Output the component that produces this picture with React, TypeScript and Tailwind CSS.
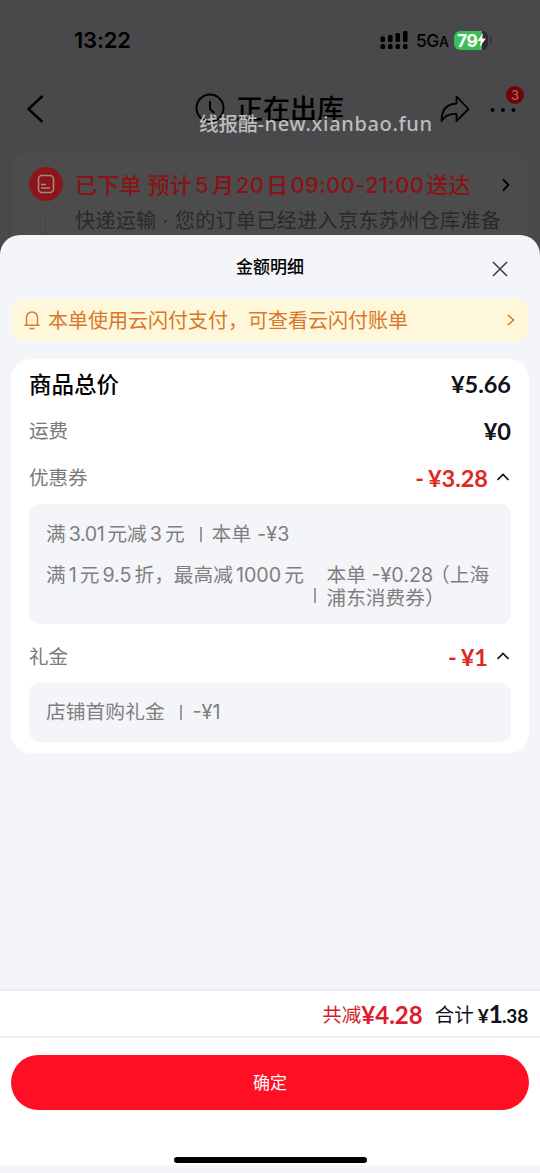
import React from "react";

const font = "font-['Inter','Noto_Sans_CJK_SC',sans-serif]";

function StatusBar() {
  return (
    <div className="flex h-[62px] items-center pt-[18px] pl-[74px] text-black">
      <span className="w-[306px] text-[22px] leading-[44px] font-semibold tracking-[-0.2px]">
        13:22
      </span>
      <svg width="28" height="20" viewBox="0 0 28 20" fill="#000">
        <rect x="0.5" y="6.5" width="4.5" height="5.5" rx="1.2" />
        <rect x="8" y="5" width="4.5" height="7" rx="1.2" />
        <rect x="15.5" y="3" width="4.5" height="9" rx="1.2" />
        <rect x="23" y="1" width="4.5" height="11" rx="1.2" />
        <rect x="0.5" y="14" width="4.5" height="5" rx="1.5" />
        <rect x="8" y="14" width="4.5" height="5" rx="1.5" />
        <rect x="15.5" y="14" width="4.5" height="5" rx="1.5" />
        <rect x="23" y="14" width="4.5" height="5" rx="1.5" />
      </svg>
      <span className="ml-2 w-[38px] pt-[2px] text-[17.5px] font-medium tracking-[-0.5px] whitespace-nowrap">
        5G<span className="text-[14px]">A</span>
      </span>
      <div className="relative flex h-[19px] w-[34px] items-center overflow-hidden rounded-[6px] bg-[#2c2d31]">
        <div className="absolute inset-y-0 left-0 w-[28px] bg-[#3bbd58]" />
        <span className="relative ml-[3px] text-[17.5px] leading-[19px] font-bold tracking-[-0.5px] text-white">
          79
        </span>
        <svg
          className="relative"
          width="9"
          height="14"
          viewBox="0 0 9 14"
          fill="#fff"
        >
          <path d="M6 0L0.5 8h3.3L2.8 14L8.8 5.6H5.2z" />
        </svg>
      </div>
      <div className="ml-[2px] h-[6px] w-[2px] rounded-r bg-[#37373a]" />
    </div>
  );
}

function NavBar() {
  return (
    <div className="relative flex h-[90px] items-center pl-[26px] text-black">
      <svg
        className="mt-[4px]"
        width="18"
        height="28"
        viewBox="0 0 18 28"
        fill="none"
        stroke="#000"
        strokeWidth="2.4"
      >
        <path d="M16.5 1L2.5 14L16.5 27" />
      </svg>
      <svg
        className="mt-px ml-[151px]"
        width="30"
        height="30"
        viewBox="0 0 30 30"
        fill="none"
        stroke="#000"
        strokeWidth="2"
      >
        <circle cx="15" cy="15" r="13.5" />
        <path d="M15 8v8l4.5 4" />
      </svg>
      <h1 className="mt-[5px] ml-[11px] w-[204px] text-[27px] leading-[36px] font-medium whitespace-nowrap">
        正在出库
      </h1>
      <svg
        className="mt-[4px]"
        width="30"
        height="28"
        viewBox="0 0 30 28"
        fill="none"
        stroke="#000"
        strokeWidth="1.8"
        strokeLinejoin="round"
      >
        <path d="M16.5 1.5L28.5 14L16.5 26V19C9 18.5 4.5 21 1.5 26C1.5 15 7 9 16.5 8.5z" />
      </svg>
      <svg className="mt-[5px] ml-[19px]" width="28" height="6" fill="#000">
        <circle cx="3.5" cy="3" r="1.9" />
        <circle cx="14" cy="3" r="1.9" />
        <circle cx="24.5" cy="3" r="1.9" />
      </svg>
      <span className="absolute top-[24px] left-[506px] h-[18px] w-[18px] rounded-full bg-[#710505] text-center text-[13px] leading-[18px] text-[#b56b6b]">
        3
      </span>
      <span className="absolute top-[48px] left-[199px] font-['Noto_Sans','Noto_Sans_CJK_SC',sans-serif] text-[19.5px] leading-[28px] font-medium whitespace-nowrap text-[#bdbdbe]">
        线报酷
        <span className="text-[20px] tracking-[0.65px]">-new.xianbao.fun</span>
      </span>
    </div>
  );
}

function OrderStatus() {
  return (
    <div className="mx-[12px] flex h-[120px] rounded-[16px] bg-[#4c4c4c] pt-[15px] pl-[17px]">
      <div className="flex w-[46px] shrink-0 flex-col">
        <svg width="34" height="34" viewBox="0 0 34 34" fill="none">
          <circle cx="17" cy="17" r="17" fill="#8c1519" />
          <rect
            x="9.5"
            y="8.5"
            width="15"
            height="17"
            rx="3.5"
            stroke="#a58787"
            strokeWidth="1.6"
          />
          <path d="M12 17.5h5M12 21h9" stroke="#a58787" strokeWidth="1.6" />
        </svg>
        <div className="mt-[8px] ml-[16px] h-[60px] w-px bg-[#454547]" />
      </div>
      <div className="w-[427px] shrink-0 pt-px whitespace-nowrap">
        <p className="text-[22px] leading-[34px] tracking-[0.2px] text-[#8b1215]">
          <span className="font-medium">已下单 预计</span>
          <span className="mx-[3px] font-medium">5</span>
          <span className="font-medium">月</span>
          <span className="mx-[2px] font-medium">20</span>
          <span className="font-medium">日</span>
          <span className="mx-[2px] font-medium tracking-[0.3px]">
            09:00-21:00
          </span>
          <span className="font-medium">送达</span>
        </p>
        <p className="text-[20px] leading-[38px] tracking-[0.4px] text-[#292929]">
          快递运输 · 您的订单已经进入京东苏州仓库准备
        </p>
      </div>
      <svg
        className="mt-[11px] shrink-0"
        width="8"
        height="14"
        viewBox="0 0 8 14"
        fill="none"
        stroke="#000"
        strokeWidth="1.8"
      >
        <path d="M1 1.5L6.5 7L1 12.5" />
      </svg>
    </div>
  );
}

function Notice() {
  return (
    <div className="mx-[12px] flex h-[42px] items-center rounded-[10px] bg-[#fff7d9] text-[#d9772b]">
      <svg
        className="ml-[12px]"
        width="16"
        height="20"
        viewBox="0 0 16 20"
        fill="none"
        stroke="currentColor"
        strokeWidth="1.5"
      >
        <path d="M2.5 15V7.5a5.5 5.5 0 0 1 11 0V15M0.5 15.2h15M5.5 18.5h5" />
      </svg>
      <span className="ml-[8px] flex-1 pt-[2px] text-[20px] whitespace-nowrap">
        本单使用云闪付支付，可查看云闪付账单
      </span>
      <svg
        className="mr-[13px]"
        width="8"
        height="12"
        viewBox="0 0 8 12"
        fill="none"
        stroke="currentColor"
        strokeWidth="1.6"
      >
        <path d="M1 1L6.5 6L1 11" />
      </svg>
    </div>
  );
}

function Row({ label, bold, children }: any) {
  return (
    <div className="flex h-[47px] items-center justify-between whitespace-nowrap">
      <span
        className={
          bold
            ? "pt-[2px] text-[22.5px] font-medium text-black"
            : "pt-[2px] text-[19.5px] text-[#7a7a7a]"
        }
      >
        {label}
      </span>
      {children}
    </div>
  );
}

function Price({ value, red }: { value: string; red?: boolean }) {
  return (
    <span
      className={`flex items-center pt-[2px] font-['Lato',sans-serif] text-[23.5px] font-bold ${
        red ? "text-[#dd2a1b]" : "text-[#111119]"
      }`}
    >
      {red && <span className="mr-[4px]">-</span>}
      {value}
      {red && (
        <svg
          className="mb-[2px] ml-[9px] mr-[2px]"
          width="12"
          height="10"
          viewBox="0 0 12 10"
          fill="none"
          stroke="#111"
          strokeWidth="1.6"
        >
          <path d="M0.5 7L6 1.5L11.5 7" />
        </svg>
      )}
    </span>
  );
}

function Divider() {
  return <span className="h-[15px] w-[1.5px] shrink-0 bg-[#9a9a9c]" />;
}

function Details() {
  return (
    <div className="mx-[11px] h-[394px] rounded-[20px] bg-white px-[18px] pt-px whitespace-nowrap">
      <Row label="商品总价" bold>
        <Price value="¥5.66" />
      </Row>
      <Row label="运费">
        <Price value="¥0" />
      </Row>
      <Row label="优惠券">
        <Price value="¥3.28" red />
      </Row>
      <div className="mt-[3px] h-[120px] rounded-[10px] bg-[#f4f5f9] px-[17px] pt-[16px] text-[19.7px] leading-[28px] text-[#7f7f80]">
        <div className="flex h-[28px] items-center">
          <span className="w-[154px]">
            满<span className="mx-[3px] tracking-[-0.4px]">3.01</span>元减
            <span className="mx-[3px]">3</span>元
          </span>
          <Divider />
          <span className="ml-[10px] tracking-[0.2px]">本单 -¥3</span>
        </div>
        <div className="mt-[16px] flex items-start leading-[23px]">
          <span className="w-[268px]">
            满<span className="mx-[3px]">1</span>元
            <span className="mx-[3px]">9.5</span>折，最高减
            <span className="mx-[3px]">1000</span>元
          </span>
          <span className="mt-[24px] flex">
            <Divider />
          </span>
          <span className="ml-[11px]">
            本单 -¥0.28<span className="-ml-[3px]">（上海</span>
            <br />
            浦东消费券）
          </span>
        </div>
      </div>
      <div className="pt-[9px]">
        <Row label="礼金">
          <Price value="¥1" red />
        </Row>
      </div>
      <div className="mt-[3px] flex h-[59px] items-center rounded-[10px] bg-[#f4f5f9] px-[17px] text-[19.8px] text-[#7f7f80]">
        <span className="w-[134px]">店铺首购礼金</span>
        <Divider />
        <span className="ml-[11px] pt-px">-¥1</span>
      </div>
    </div>
  );
}

function Footer() {
  return (
    <div className="h-[176px] border-t-2 border-[#ececee] bg-white">
      <div className="flex h-[47px] items-center justify-end border-b-2 border-[#efeff0] pr-[12px] text-[19.5px] whitespace-nowrap">
        <span className="pt-[4px] text-[#d21f2c]">共减</span>
        <span className="pt-[2px] font-['Lato',sans-serif] text-[24px] font-bold text-[#dc1c2b]">
          ¥4.28
        </span>
        <span className="ml-[12px] pt-[4px] text-[#111119]">合计</span>
        <span className="ml-[4px] font-['Lato',sans-serif] text-[19px] font-bold tracking-[-0.2px] text-[#111119]">
          ¥<span className="text-[25px] tracking-[-1px]">1</span>.38
        </span>
      </div>
      <button className="mx-[11px] mt-[17px] block h-[55px] w-[518px] rounded-full bg-[#ff0f23] pt-[2px] text-[17px] text-white">
        确定
      </button>
      <div className="mx-auto mt-[47px] h-[6px] w-[193px] rounded-full bg-black" />
    </div>
  );
}

export default function App() {
  return (
    <div
      className={`relative h-[1173px] w-[540px] overflow-hidden bg-[#49494b] ${font}`}
    >
      <StatusBar />
      <NavBar />
      <OrderStatus />
      {/* bottom sheet */}
      <div className="absolute inset-x-0 top-[235px] bottom-0 flex flex-col rounded-t-[20px] bg-[#f4f5f9]">
        <div className="relative h-[64px] text-center text-[17px] leading-[65px] font-medium text-black">
          金额明细
          <svg
            className="absolute top-[26px] left-[492px]"
            width="16"
            height="16"
            viewBox="0 0 16 16"
            stroke="#3a3a3c"
            strokeWidth="1.5"
          >
            <path d="M1 1L15 15M15 1L1 15" />
          </svg>
        </div>
        <Notice />
        <div className="h-[18px]" />
        <Details />
        <div className="flex-1" />
        <Footer />
        <div className="h-[8px]" />
      </div>
    </div>
  );
}
